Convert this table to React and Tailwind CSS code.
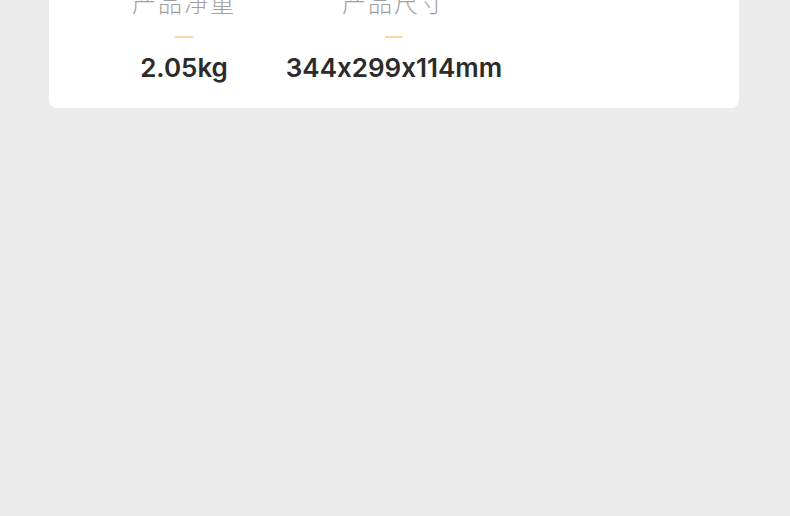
import React from 'react';

const specs = [
    { label: '产品净重', value: '2.05kg' },
    { label: '产品尺寸', value: '344x299x114mm' },
];

export default function App() {
    return (
        <div className="h-[516px] w-full overflow-hidden bg-[#ececec]">
            <div className="ml-[49px] w-[690px] -mt-[20px] pt-[10px] pb-[25px] pl-[30px] bg-white rounded-b-[8px] flex">
                {specs.map((s) => (
                    <div key={s.label} className="w-[210px] flex flex-col items-center">
                        <div className="h-[24px] leading-[24px] text-[24px] text-[#a0a0a0] font-light tracking-[2px] font-['Noto_Sans_CJK_SC',sans-serif]">
                            {s.label}
                        </div>
                        <div className="mt-[22px] h-[2px] w-[18px] bg-[#fcd9a4]" />
                        <div className="mt-[15px] h-[30px] leading-[30px] text-[26px] font-semibold text-[#2b2b2b] font-['Inter',sans-serif] [font-feature-settings:'calt'_0]">
                            {s.value}
                        </div>
                    </div>
                ))}
            </div>
        </div>
    );
}
